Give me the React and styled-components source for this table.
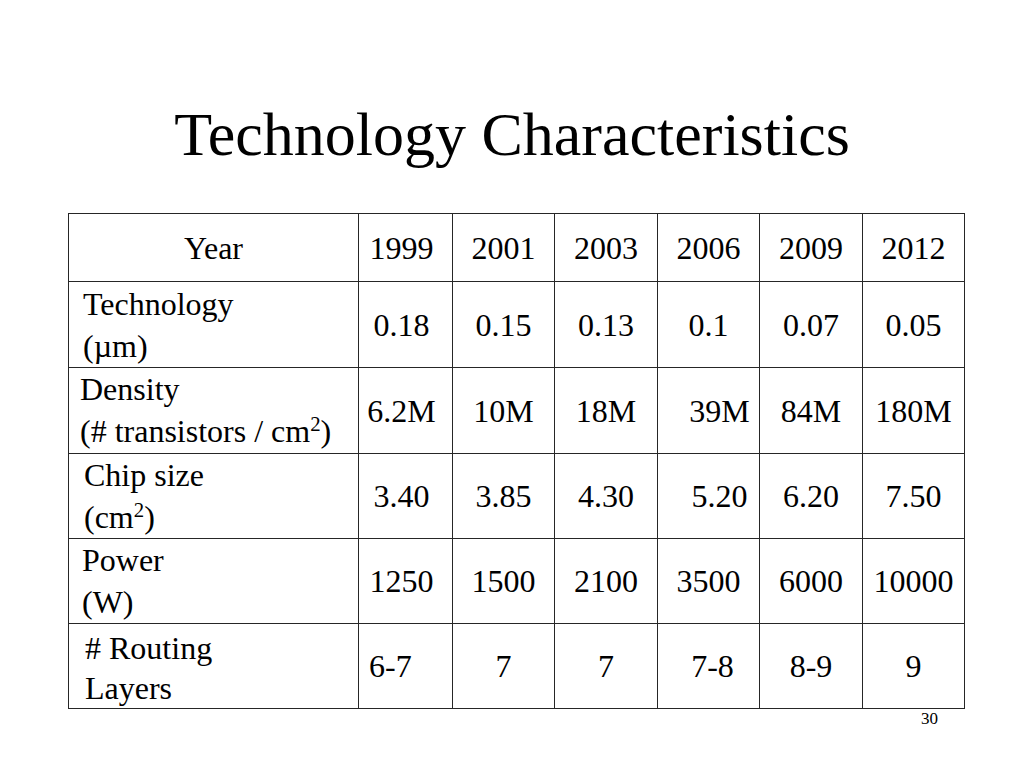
import styled, { createGlobalStyle } from "styled-components";

const GlobalStyle = createGlobalStyle`
  html, body {
    margin: 0;
    padding: 0;
    background: #ffffff;
  }
  body {
    font-family: "Liberation Serif", "Times New Roman", serif;
    color: #000000;
  }
`;

const Slide = styled.div`
  width: 1024px;
  height: 768px;
  display: flex;
  flex-direction: column;
  align-items: center;
  background: #ffffff;
  box-sizing: border-box;
  padding-top: 103px;
`;

const Title = styled.h1`
  margin: 0;
  font-weight: normal;
  font-size: 62px;
  line-height: 62px;
  text-align: center;
`;

const TableWrap = styled.div`
  align-self: flex-start;
  margin-top: 48px;
  margin-left: 68px;
  width: 897px;
  display: flex;
  flex-direction: column;
`;

const Table = styled.table`
  border-collapse: collapse;
  table-layout: fixed;
  width: 897px;
  font-size: 32px;
`;

const Row = styled.tr`
  height: ${(p) => p.$h}px;
`;

const Cell = styled.td`
  border: 1px solid #262626;
  padding: 0 ${(p) => p.$right || 0}px 0 ${(p) => p.$shift || 0}px;
  text-align: ${(p) => p.$align || "center"};
  vertical-align: middle;
  white-space: nowrap;
  line-height: 36px;
`;

const LabelCell = styled.td`
  border: 1px solid #262626;
  padding: ${(p) => p.$top || 0}px 0 0 ${(p) => p.$pad ?? 14}px;
  vertical-align: top;
  line-height: ${(p) => p.$lh || 42}px;
  white-space: nowrap;
`;

const Sup = styled.sup`
  font-size: 0.65em;
  line-height: 0;
  vertical-align: 0.55em;
`;

const PageNum = styled.div`
  align-self: flex-end;
  margin-right: 27px;
  margin-top: 1px;
  font-size: 17px;
  line-height: 17px;
`;

const widths = [290, 94, 102, 103, 102, 103, 102];

const rows = [
  {
    label: ["Technology", "(\u00b5m)"],
    h: 85,
    top: 1,
    values: ["0.18", "0.15", "0.13", "0.1", "0.07", "0.05"],
  },
  {
    label: ["Density", <>(# transistors / cm<Sup>2</Sup>)</>],
    h: 86,
    pad: 11,
    values: ["6.2M", "10M", "18M", ["39M", 22], "84M", "180M"],
  },
  {
    label: ["Chip size", <>(cm<Sup>2</Sup>)</>],
    h: 85,
    pad: 15,
    values: ["3.40", "3.85", "4.30", ["5.20", 22], "6.20", "7.50"],
  },
  {
    label: ["Power", "(W)"],
    h: 85,
    pad: 13,
    values: ["1250", "1500", "2100", "3500", "6000", "10000"],
  },
  {
    label: ["# Routing", "Layers"],
    h: 85,
    pad: 16,
    top: 4,
    lh: 40,
    values: [["6-7", 0, "left", 10], "7", "7", ["7-8", 8], "8-9", "9"],
  },
];

// the first year column sits a little left of centre in the slide
const Value = ({ v, col }) => {
  const right = col === 0 ? 8 : 0;
  if (Array.isArray(v)) {
    const [text, shift, align, pad] = v;
    return (
      <Cell $shift={align === "left" ? pad : shift} $align={align}>
        {text}
      </Cell>
    );
  }
  return <Cell $right={right}>{v}</Cell>;
};

export default function App() {
  return (
    <>
      <GlobalStyle />
      <Slide>
        <Title>Technology Characteristics</Title>
        <TableWrap>
          <Table>
            <colgroup>
              {widths.map((w, i) => (
                <col key={i} style={{ width: w }} />
              ))}
            </colgroup>
            <tbody>
              <Row $h={68}>
                <Cell>Year</Cell>
                {["1999", "2001", "2003", "2006", "2009", "2012"].map((y, j) => (
                  <Value key={y} v={y} col={j} />
                ))}
              </Row>
              {rows.map((r, i) => (
                <Row key={i} $h={r.h}>
                  <LabelCell $pad={r.pad} $top={r.top} $lh={r.lh}>
                    {r.label[0]}
                    <br />
                    {r.label[1]}
                  </LabelCell>
                  {r.values.map((v, j) => (
                    <Value key={j} v={v} col={j} />
                  ))}
                </Row>
              ))}
            </tbody>
          </Table>
          <PageNum>30</PageNum>
        </TableWrap>
      </Slide>
    </>
  );
}
